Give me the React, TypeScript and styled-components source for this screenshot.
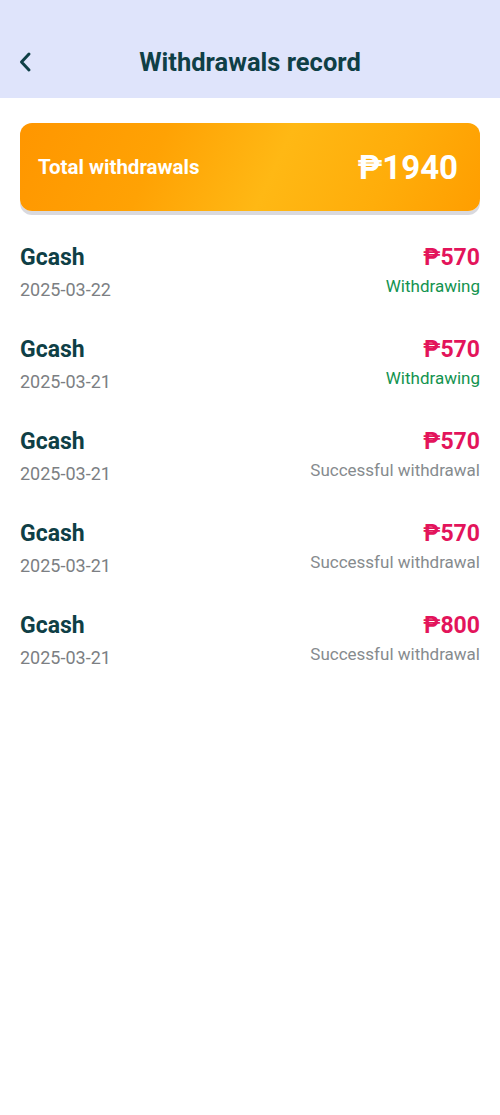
import React from "react";
import styled, { createGlobalStyle } from "styled-components";

const Global = createGlobalStyle`
  html, body { margin: 0; padding: 0; background: #ffffff; }
  body { font-family: Roboto, "Noto Sans", "Liberation Sans", sans-serif; }
  * { box-sizing: border-box; }
`;

const Page = styled.div`
  width: 500px;
  min-height: 1115px;
  background: #ffffff;
  display: flex;
  flex-direction: column;
`;

const Header = styled.header`
  height: 98px;
  background: #dfe4fb;
  display: grid;
  grid-template-columns: 60px 1fr 60px;
  align-items: end;
  padding-bottom: 20px;
`;

const BackButton = styled.button`
  border: none;
  background: transparent;
  padding: 0 0 0 17px;
  display: flex;
  align-items: center;
  height: 32px;
  cursor: pointer;
`;

const Title = styled.h1`
  margin: 0;
  text-align: center;
  font-size: 25.5px;
  font-weight: 700;
  color: #0f3f46;
  line-height: 32px;
`;

const Content = styled.main`
  padding: 25px 20px 0;
  display: flex;
  flex-direction: column;
`;

const TotalCard = styled.section`
  height: 88px;
  border-radius: 12px;
  background: linear-gradient(115deg, #ff9600 0%, #ffa204 30%, #ffb814 55%, #ffad0a 78%, #ff9e00 100%);
  box-shadow: 0 4px 0 #d9d9de;
  display: flex;
  align-items: center;
  justify-content: space-between;
  padding: 0 22px 0 18px;
  color: #ffffff;
`;

const TotalLabel = styled.span`
  font-size: 20.5px;
  font-weight: 700;
`;

const TotalValue = styled.span`
  font-size: 33px;
  font-weight: 700;
`;

const List = styled.ul`
  list-style: none;
  margin: 33px 0 0;
  padding: 0;
  display: flex;
  flex-direction: column;
  gap: 26px;
`;

const Row = styled.li`
  display: flex;
  justify-content: space-between;
  align-items: flex-start;
  height: 66px;
`;

const Col = styled.div<{ $right?: boolean }>`
  display: flex;
  flex-direction: column;
  align-items: ${(p) => (p.$right ? "flex-end" : "flex-start")};
  gap: ${(p) => (p.$right ? "4px" : "7px")};
`;

const Method = styled.span`
  font-size: 23px;
  font-weight: 700;
  color: #0f3f46;
  line-height: 28px;
`;

const DateText = styled.span`
  font-size: 18px;
  color: #7c7f83;
  line-height: 22px;
`;

const Amount = styled.span`
  font-size: 23px;
  font-weight: 700;
  color: #e3145b;
  line-height: 28px;
`;

const Status = styled.span<{ $pending?: boolean }>`
  font-size: 17px;
  color: ${(p) => (p.$pending ? "#13934f" : "#868b8e")};
  line-height: 20px;
`;

const records = [
  { date: "2025-03-22", amount: 570, pending: true },
  { date: "2025-03-21", amount: 570, pending: true },
  { date: "2025-03-21", amount: 570, pending: false },
  { date: "2025-03-21", amount: 570, pending: false },
  { date: "2025-03-21", amount: 800, pending: false },
];

export default function App() {
  return (
    <Page>
      <Global />
      <Header>
        <BackButton aria-label="Back">
          <svg width="16" height="24" viewBox="0 0 16 24" fill="none">
            <path d="M12 4 L4.5 12 L12 20" stroke="#0f3f46" strokeWidth="3" strokeLinecap="round" strokeLinejoin="round" />
          </svg>
        </BackButton>
        <Title>Withdrawals record</Title>
        <div />
      </Header>
      <Content>
        <TotalCard>
          <TotalLabel>Total withdrawals</TotalLabel>
          <TotalValue>₱1940</TotalValue>
        </TotalCard>
        <List>
          {records.map((r, i) => (
            <Row key={i}>
              <Col>
                <Method>Gcash</Method>
                <DateText>{r.date}</DateText>
              </Col>
              <Col $right>
                <Amount>₱{r.amount}</Amount>
                <Status $pending={r.pending}>
                  {r.pending ? "Withdrawing" : "Successful withdrawal"}
                </Status>
              </Col>
            </Row>
          ))}
        </List>
      </Content>
    </Page>
  );
}
